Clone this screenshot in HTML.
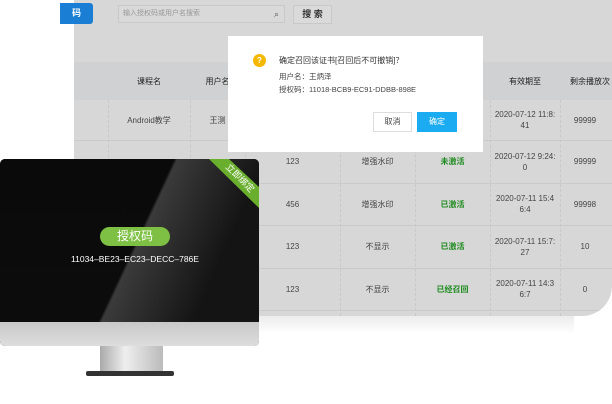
<!DOCTYPE html>
<html><head><meta charset="utf-8"><style>
*{margin:0;padding:0;box-sizing:border-box}
body{width:612px;height:404px;background:#fff;position:relative;overflow:hidden;font-family:"Liberation Sans","Noto Sans CJK SC",sans-serif;font-size:8px;color:#444}
.panel{position:absolute;left:74px;top:0;width:538px;height:316px;background:#d7d7d7;border-bottom-right-radius:30px;overflow:hidden}
.shadow{position:absolute;left:74px;top:316px;width:500px;height:18px;background:linear-gradient(#ececec,#fff)}
.abs{position:absolute}
.hdr{position:absolute;left:0;top:62px;width:538px;height:38px;background:#cfd1d2}
.cell{position:absolute;text-align:center;line-height:11px;display:flex;align-items:center;justify-content:center}
.vl{position:absolute;top:100px;height:216px;border-left:1px dashed #c8c8c8}
.hl{position:absolute;left:0;width:538px;border-top:1px solid #cacaca}
.g{color:#1c8a1c;font-weight:bold}
</style></head><body>
<div class="panel">
 <div class="hdr"></div>
 <div class="abs" style="left:44px;top:5px;width:167px;height:18px;border:1px solid #c9c9c9;background:#d9d9d9;color:#999;font-size:7px;line-height:16px;padding-left:4px">输入授权码或用户名搜索<span style="position:absolute;right:5px;top:0;font-size:9px;color:#555">⌕</span></div>
 <div class="abs" style="left:219px;top:5px;width:39px;height:19px;border:1px solid #c9c9c9;background:#dadada;color:#333;font-size:9px;text-align:center;line-height:17px;font-weight:bold">搜 索</div>
 <div class="vl" style="left:34px"></div><div class="vl" style="left:116px"></div><div class="vl" style="left:171px"></div><div class="vl" style="left:266px"></div><div class="vl" style="left:341px"></div><div class="vl" style="left:416px"></div><div class="vl" style="left:486px"></div>
 <div class="hl" style="top:140px"></div><div class="hl" style="top:183px"></div><div class="hl" style="top:225px"></div><div class="hl" style="top:268px"></div><div class="hl" style="top:310px"></div>
 <div class="cell" style="left:34px;top:62px;width:82px;height:38px;color:#222">课程名</div>
 <div class="cell" style="left:116px;top:62px;width:55px;height:38px;color:#222">用户名</div>
 <div class="cell" style="left:416px;top:62px;width:70px;height:38px;color:#222">有效期至</div>
 <div class="cell" style="left:486px;top:62px;width:60px;height:38px;color:#222">剩余播放次</div>
 <div class="cell" style="left:34px;top:100px;width:82px;height:40px">Android教学</div>
 <div class="cell" style="left:116px;top:100px;width:55px;height:40px">王测</div>
 <div class="cell" style="left:416px;top:100px;width:70px;height:40px">2020-07-12 11:8:<br>41</div>
 <div class="cell" style="left:486px;top:100px;width:50px;height:40px">99999</div>
 <div class="cell" style="left:171px;top:140px;width:95px;height:43px">123</div>
 <div class="cell" style="left:266px;top:140px;width:75px;height:43px">增强水印</div>
 <div class="cell g" style="left:341px;top:140px;width:75px;height:43px">未激活</div>
 <div class="cell" style="left:416px;top:140px;width:70px;height:43px">2020-07-12 9:24:<br>0</div>
 <div class="cell" style="left:486px;top:140px;width:50px;height:43px">99999</div>
 <div class="cell" style="left:171px;top:183px;width:95px;height:42px">456</div>
 <div class="cell" style="left:266px;top:183px;width:75px;height:42px">增强水印</div>
 <div class="cell g" style="left:341px;top:183px;width:75px;height:42px">已激活</div>
 <div class="cell" style="left:416px;top:183px;width:70px;height:42px">2020-07-11 15:4<br>6:4</div>
 <div class="cell" style="left:486px;top:183px;width:50px;height:42px">99998</div>
 <div class="cell" style="left:171px;top:225px;width:95px;height:43px">123</div>
 <div class="cell" style="left:266px;top:225px;width:75px;height:43px">不显示</div>
 <div class="cell g" style="left:341px;top:225px;width:75px;height:43px">已激活</div>
 <div class="cell" style="left:416px;top:225px;width:70px;height:43px">2020-07-11 15:7:<br>27</div>
 <div class="cell" style="left:486px;top:225px;width:50px;height:43px">10</div>
 <div class="cell" style="left:171px;top:268px;width:95px;height:42px">123</div>
 <div class="cell" style="left:266px;top:268px;width:75px;height:42px">不显示</div>
 <div class="cell g" style="left:341px;top:268px;width:75px;height:42px">已经召回</div>
 <div class="cell" style="left:416px;top:268px;width:70px;height:42px">2020-07-11 14:3<br>6:7</div>
 <div class="cell" style="left:486px;top:268px;width:50px;height:42px">0</div>
</div>
<div class="shadow"></div>
<div class="abs" style="left:60px;top:3px;width:33px;height:21px;background:#1a7fd4;border-radius:0 3px 3px 0;color:#fff;font-size:9px;line-height:21px;text-align:center;font-weight:bold">码</div>
<!-- dialog -->
<div class="abs" style="left:228px;top:36px;width:255px;height:116px;background:#fff">
 <div class="abs" style="left:25px;top:18px;width:13px;height:13px;border-radius:50%;background:#f5b800;color:#fff;font-size:8px;line-height:13px;text-align:center;font-weight:bold">?</div>
 <div class="abs" style="left:51px;top:19px;font-size:8px;color:#333;white-space:nowrap">确定召回该证书[召回后不可撤销]？</div>
 <div class="abs" style="left:51px;top:35px;font-size:7.5px;color:#444;white-space:nowrap">用户名：王炳泽</div>
 <div class="abs" style="left:51px;top:48px;font-size:7.5px;color:#444;white-space:nowrap">授权码：11018-BCB9-EC91-DDBB-898E</div>
 <div class="abs" style="left:145px;top:76px;width:39px;height:20px;border:1px solid #ddd;font-size:8px;line-height:18px;text-align:center;color:#444">取消</div>
 <div class="abs" style="left:189px;top:76px;width:40px;height:20px;background:#1aabf0;font-size:8px;line-height:20px;text-align:center;color:#fff">确定</div>
</div>
<!-- monitor -->
<div class="abs" style="left:0;top:159px;width:259px;height:187px;border-radius:5px;overflow:hidden;background:#0b0b0b">
 <div class="abs" style="left:0;top:0;width:259px;height:163px;background:linear-gradient(180deg,#0a0a0a,#0c0c0c)"></div>
 <div class="abs" style="left:0;top:0;width:259px;height:163px;background:linear-gradient(115deg,rgba(0,0,0,0) 52%,rgba(90,90,90,.6) 53%,rgba(40,40,40,.3) 80%)"></div>
 <svg class="abs" style="left:209px;top:0" width="50" height="51"><polygon points="0,0 20,0 50,28 50,49" fill="#6aae2e"/><text x="31" y="22" fill="#fff" font-size="9" font-family="Noto Sans CJK SC,sans-serif" transform="rotate(45 31 19)" text-anchor="middle">立即绑定</text></svg>
 <div class="abs" style="left:100px;top:68px;width:70px;height:19px;border-radius:10px;background:#7dc043;color:#fff;font-size:12px;line-height:19px;text-align:center">授权码</div>
 <div class="abs" style="left:0;top:95px;width:270px;text-align:center;color:#fff;font-size:8.5px">11034–BE23–EC23–DECC–786E</div>
 <div class="abs" style="left:0;top:163px;width:259px;height:24px;background:linear-gradient(#c8c8c8,#ddd)"></div>
</div>
<div class="abs" style="left:100px;top:346px;width:63px;height:26px;background:linear-gradient(90deg,#aaa,#eee 40%,#bbb)"></div>
<div class="abs" style="left:86px;top:371px;width:88px;height:5px;background:#333;border-radius:2px"></div>
</body></html>
